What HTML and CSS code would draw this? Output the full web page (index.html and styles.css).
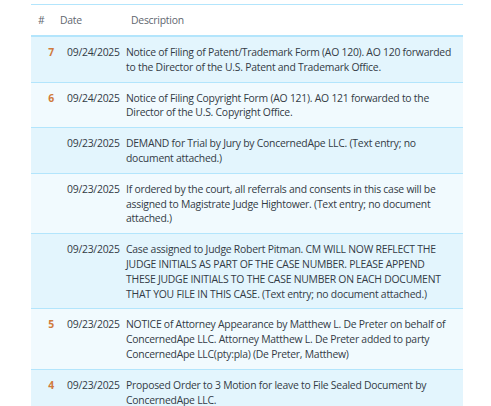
FILE: index.html
```html
<!DOCTYPE html>
<html>
<head>
<meta charset="utf-8">
<link rel="stylesheet" href="styles.css">
</head>
<body>
<div class="docket">
  <table class="docket-table">
    <colgroup>
      <col class="c-num"><col class="c-date"><col class="c-desc">
    </colgroup>
    <thead>
      <tr><th class="h-num">#</th><th class="h-date">Date</th><th class="h-desc">Description</th></tr>
    </thead>
    <tbody>
      <tr class="odd"><td class="num">7</td><td class="date">09/24/2025</td><td class="desc">Notice of Filing of Patent/Trademark Form (AO 120). AO 120 forwarded to the Director of the U.S. Patent and Trademark Office.</td></tr>
      <tr class="even"><td class="num">6</td><td class="date">09/24/2025</td><td class="desc">Notice of Filing Copyright Form (AO 121). AO 121 forwarded to the Director of the U.S. Copyright Office.</td></tr>
      <tr class="odd"><td class="num"></td><td class="date">09/23/2025</td><td class="desc">DEMAND for Trial by Jury by ConcernedApe LLC. (Text entry; no document attached.)</td></tr>
      <tr class="even"><td class="num"></td><td class="date">09/23/2025</td><td class="desc">If ordered by the court, all referrals and consents in this case will be assigned to Magistrate Judge Hightower. (Text entry; no document attached.)</td></tr>
      <tr class="odd"><td class="num"></td><td class="date">09/23/2025</td><td class="desc">Case assigned to Judge Robert Pitman. CM WILL NOW REFLECT THE JUDGE INITIALS AS PART OF THE CASE NUMBER. PLEASE APPEND THESE JUDGE INITIALS TO THE CASE NUMBER ON EACH DOCUMENT THAT YOU FILE IN THIS CASE. (Text entry; no document attached.)</td></tr>
      <tr class="even"><td class="num">5</td><td class="date">09/23/2025</td><td class="desc">NOTICE of Attorney Appearance by Matthew L. De Preter on behalf of ConcernedApe LLC. Attorney Matthew L. De Preter added to party ConcernedApe LLC(pty:pla) (De Preter, Matthew)</td></tr>
      <tr class="odd"><td class="num">4</td><td class="date">09/23/2025</td><td class="desc">Proposed Order to 3 Motion for leave to File Sealed Document by ConcernedApe LLC.</td></tr>
    </tbody>
  </table>
</div>
</body>
</html>
```

FILE: styles.css
```css
html, body {
  margin: 0;
  padding: 0;
  background: #ffffff;
}
body {
  font-family: "Open Sans", "Noto Sans", sans-serif;
  font-size: 10.4px;
  letter-spacing: -0.24px;
  color: #333b45;
}
.docket {
  margin: 4px 0 0 31px;
  width: 432px;
}
.docket-table {
  width: 100%;
  border-collapse: collapse;
  table-layout: fixed;
  border-top: 1px solid #b3e5fc;
}
.c-num { width: 29px; }
.c-date { width: 62px; }
.docket-table th {
  font-weight: normal;
  color: #5f6770;
  text-align: left;
  height: 30px;
  padding: 0;
  border-bottom: 2px solid #b3e5fc;
  vertical-align: middle;
}
.h-num { padding-left: 7px !important; }
.h-date { padding-left: 0; }
.h-desc { padding-left: 9px !important; }
.docket-table td {
  vertical-align: top;
  padding: 8px 0 7px 0;
  line-height: 14.8px;
  border-bottom: 1px solid #b3e5fc;
}
.odd td { background: #e3f5fd; }
.even td { background: #f1fafe; }
.num {
  text-align: right;
  padding-right: 6px !important;
  font-weight: bold;
  color: #d07a3c;
}
.date { padding-left: 7px !important; white-space: nowrap; }
.desc { padding-left: 4px !important; padding-right: 10px !important; }
```
